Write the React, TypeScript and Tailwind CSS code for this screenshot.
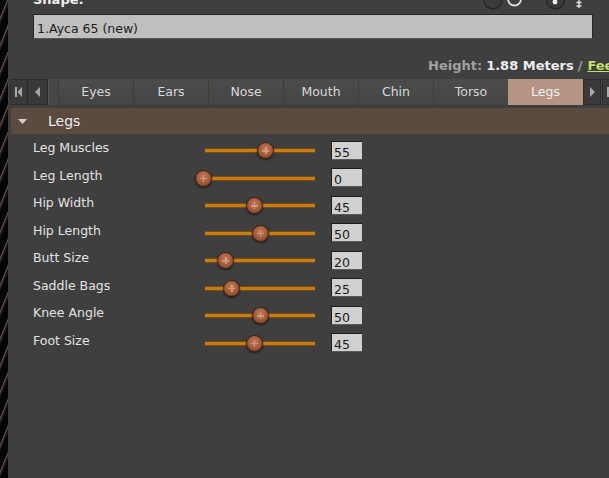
import React from "react";

const rows: [string, number][] = [
  ["Leg Muscles", 55],
  ["Leg Length", 0],
  ["Hip Width", 45],
  ["Hip Length", 50],
  ["Butt Size", 20],
  ["Saddle Bags", 25],
  ["Knee Angle", 50],
  ["Foot Size", 45],
];

const tabs = ["Eyes", "Ears", "Nose", "Mouth", "Chin", "Torso", "Legs"];

function Slider({ value }: { value: number }) {
  // thumb centre runs from -2px to ~112px over the 110px track
  const center = -2 + value * 1.14;
  return (
    <div className="relative w-[110px] h-[18px] flex items-center">
      <div className="w-full h-[5px] bg-[#c47c14] border-y border-[#7a4a10] rounded-[1px]" />
      <div
        className="absolute top-[0.5px] w-[17px] h-[17px] rounded-full border border-[#3a2214] bg-[radial-gradient(circle_at_50%_40%,#c47c5c_0%,#a05a3a_55%,#6e3822_100%)] shadow-[0_1px_2px_rgba(0,0,0,0.6)]"
        style={{ left: center - 8.5 }}
      >
        <span className="absolute left-[7px] top-[4px] w-[1.5px] h-[7px] bg-[#d9a080]/80" />
        <span className="absolute left-[4px] top-[7px] w-[7px] h-[1.5px] bg-[#d9a080]/80" />
      </div>
    </div>
  );
}

function Row({ label, value }: { label: string; value: number }) {
  return (
    <div className="flex items-center h-[27.5px] pl-[25px]">
      <div className="w-[172px] pb-[1px] text-[12.5px] leading-[16px] text-[#e2e2e2]">{label}</div>
      <div className="mt-[4px]">
        <Slider value={value} />
      </div>
      <div className="ml-[16px] mt-[3px] w-[31px] h-[19px] bg-[#d0d0d0] border-t border-l border-[#1e1e1e] border-b border-b-[#5a5a5a] pl-[2px] pt-[3px] text-[12.5px] leading-[15px] text-[#1a1a1a]">
        {value}
      </div>
    </div>
  );
}

export default function App() {
  return (
    <div
      className="flex w-[609px] h-[478px] overflow-hidden bg-[#3f3f3f]"
      style={{ fontFamily: '"DejaVu Sans", "Liberation Sans", sans-serif' }}
    >
      {/* strip of the world view on the left */}
      <div className="w-[8px] shrink-0 h-full bg-[repeating-linear-gradient(112deg,#050505_0px,#050505_6px,#6a5552_7px,#2a2020_8px,#050505_10px)]" />

      <div className="relative flex-1 flex flex-col overflow-hidden">
        {/* radio / icons cut off by top edge */}
        <svg className="absolute left-[470px] top-0" width="120" height="12" viewBox="0 0 120 12">
          <circle cx="15" cy="0" r="9" fill="#3a3a3a" stroke="#262626" strokeWidth="1.4" />
          <circle cx="36.5" cy="-1" r="6.5" fill="none" stroke="#e4e4e4" strokeWidth="1.8" />
          <circle cx="77.5" cy="0" r="9" fill="#3a3a3a" stroke="#262626" strokeWidth="1.4" />
          <circle cx="77" cy="2" r="2.4" fill="#f2f2f2" />
          <path d="M101 0V8M98.5 2.5H103.5M98.5 6H103.5" stroke="#e8e8e8" strokeWidth="1.3" />
        </svg>

        <div className="h-[14px] pl-[25px]">
          <div className="-mt-[8px] text-[13px] leading-[16px] font-bold text-[#f0f0f0]">Shape:</div>
        </div>

        <div className="ml-[25px] mr-[16px] h-[25px] flex items-end pb-[2px] pl-[3px] bg-[#bfbfbf] border border-[#262626] border-b-[#555555] text-[12.5px] leading-[15px] text-[#1c1c1c]">
          1.Ayca 65 (new)
        </div>

        <div className="mt-[19px] h-[16px] pl-[420px] flex items-center whitespace-nowrap text-[13px] font-bold leading-[16px]">
          <span className="text-[#a0a0a0]">Height:</span>
          <span className="ml-[4px] text-[#ececec]">1.88 Meters</span>
          <span className="ml-[4px] text-[#a0a0a0]">/</span>
          <span className="ml-[5px] text-[#bfe06a] underline">Feet</span>
        </div>

        {/* tab bar */}
        <div className="mt-[5px] ml-[2px] h-[26px] flex items-stretch bg-[#474747] whitespace-nowrap">
          <div className="w-[18px] shrink-0 flex items-center justify-center bg-[#3a3a3a] border border-[#2c2c2c]">
            <svg width="10" height="10" viewBox="0 0 10 10">
              <rect x="1" y="0" width="2" height="10" fill="#a8a8a8" />
              <path d="M8 0V10L3.5 5Z" fill="#a8a8a8" />
            </svg>
          </div>
          <div className="w-[20px] shrink-0 flex items-center justify-center bg-[#3a3a3a] border border-[#2c2c2c] border-l-0">
            <svg width="8" height="10" viewBox="0 0 8 10">
              <path d="M6 0V10L1 5Z" fill="#a8a8a8" />
            </svg>
          </div>
          <div className="w-[10px] shrink-0 border-l border-[#555555]" />
          {tabs.map((t) => (
            <div
              key={t}
              className={
                t === "Legs"
                  ? "w-[75px] shrink-0 flex items-center justify-center bg-[#b69484] text-[12.5px] text-[#f2f2f2]"
                  : "w-[75px] shrink-0 flex items-center justify-center bg-[linear-gradient(#4c4c4c,#454545)] border-l border-[#3e3e3e] text-[12.5px] text-[#d8d8d8]"
              }
            >
              {t}
            </div>
          ))}
          <div className="w-[18px] shrink-0 flex items-center justify-center bg-[#3a3a3a] border border-[#2c2c2c]">
            <svg width="8" height="10" viewBox="0 0 8 10">
              <path d="M2 0V10L7 5Z" fill="#a8a8a8" />
            </svg>
          </div>
          <div className="w-[12px] shrink-0 ml-[1px] flex items-center pl-[4px] bg-[#3a3a3a] border border-[#2c2c2c]">
            <div className="w-[2px] h-[10px] bg-[#a8a8a8]" />
          </div>
        </div>

        {/* accordion header */}
        <div className="mt-[3px] ml-[3px] h-[26px] flex items-center bg-[#5b4a40]">
          <svg className="ml-[7px]" width="9" height="5" viewBox="0 0 9 5">
            <path d="M0 0H9L4.5 5Z" fill="#cfcfcf" />
          </svg>
          <span className="ml-[21px] text-[14px] leading-[16px] text-[#ececec]">Legs</span>
        </div>

        <div className="mt-[1px] flex flex-col">
          {rows.map(([l, v]) => (
            <Row key={l} label={l} value={v} />
          ))}
        </div>
      </div>
    </div>
  );
}
